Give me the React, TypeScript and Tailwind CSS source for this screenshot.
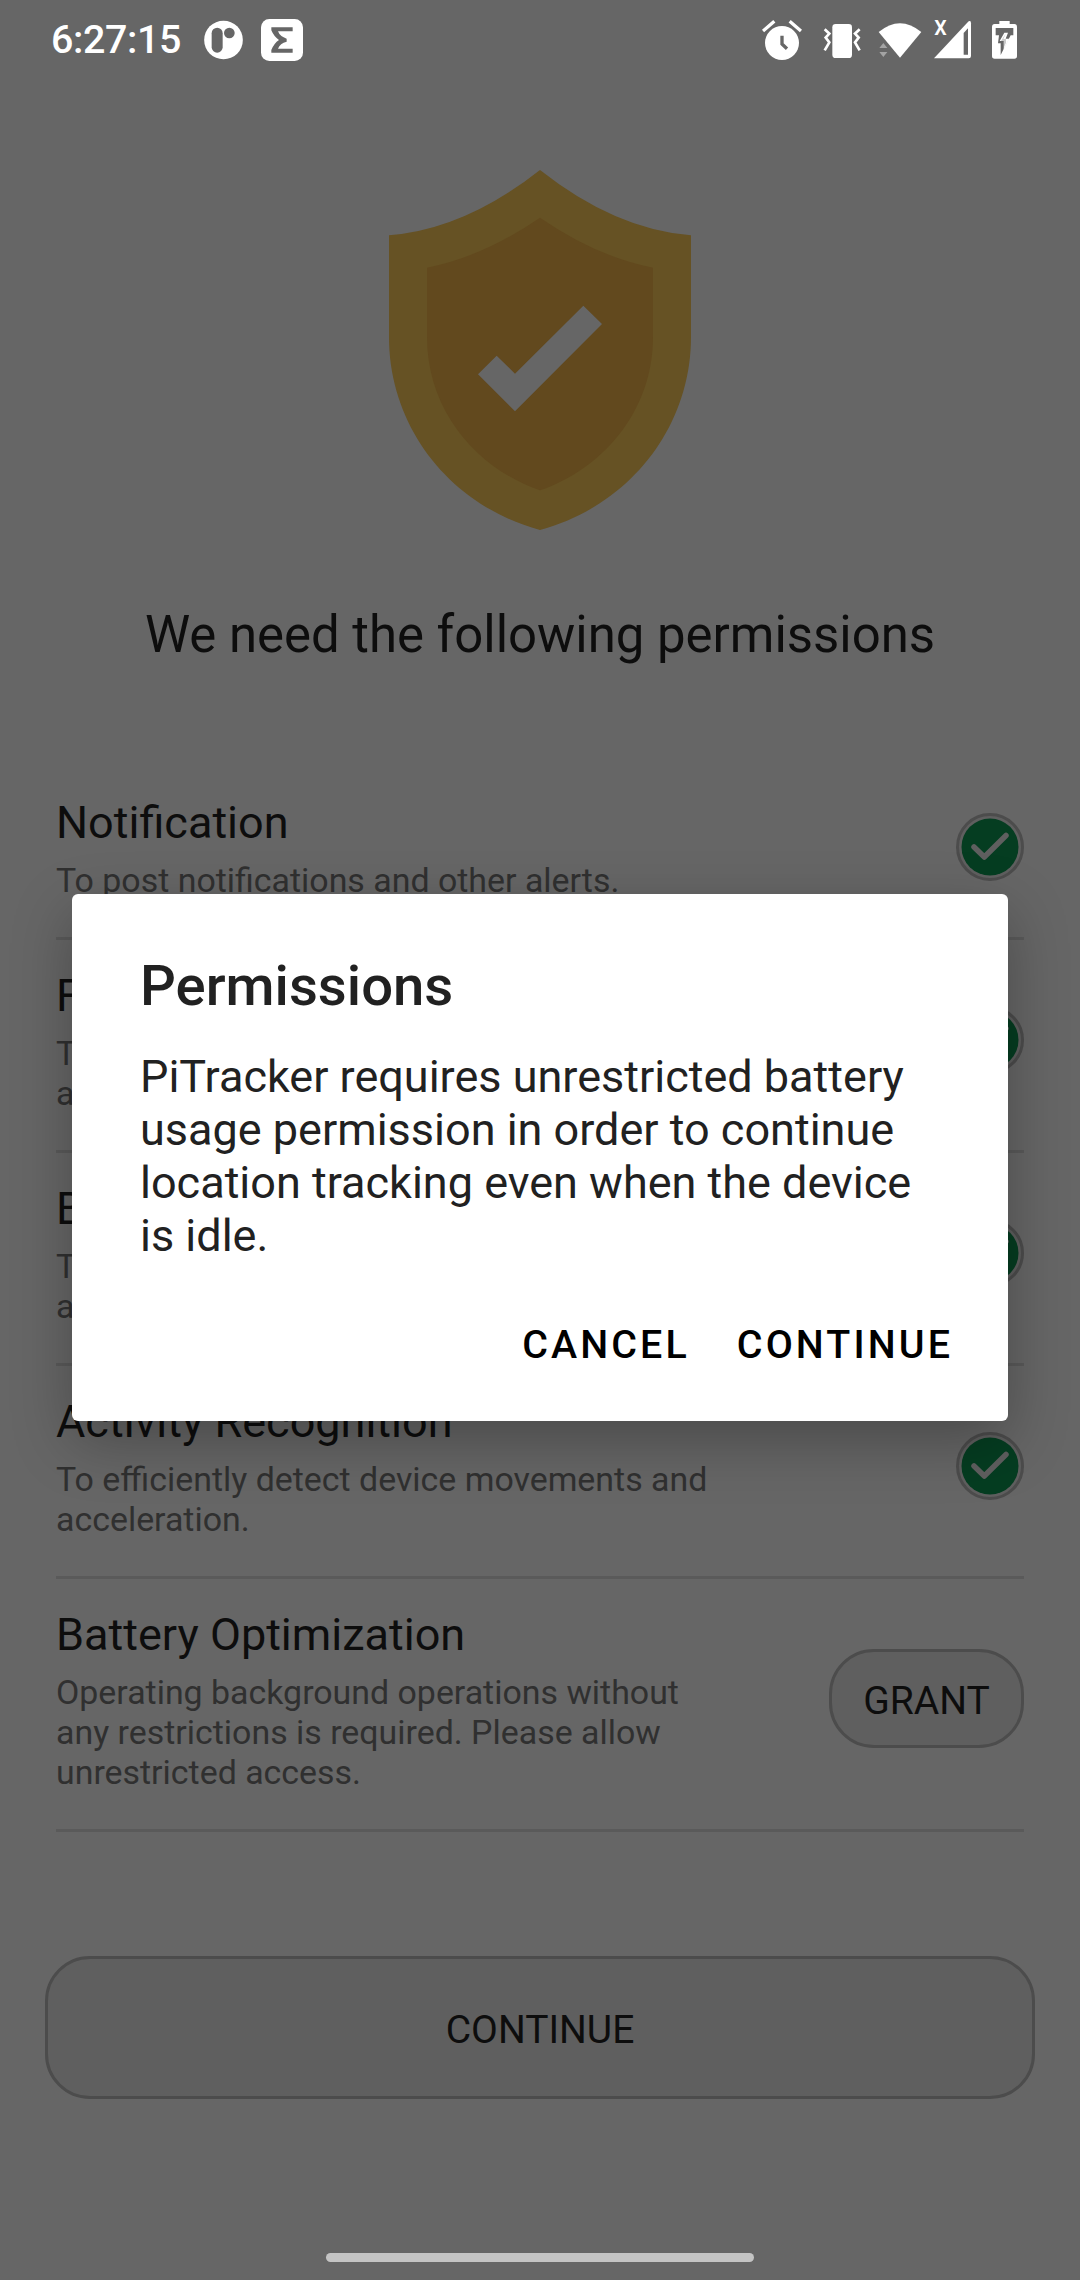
import React from 'react';

const permissions = [
  { title: 'Notification', lines: ['To post notifications and other alerts.'], granted: true },
  { title: 'Foreground Location', lines: ['To track the location of the device', 'and show it on the map.'], granted: true },
  { title: 'Background Location', lines: ['To track the location even when the', 'app is in the background.'], granted: true },
  { title: 'Activity Recognition', lines: ['To efficiently detect device movements and', 'acceleration.'], granted: true },
  {
    title: 'Battery Optimization',
    lines: ['Operating background operations without', 'any restrictions is required. Please allow', 'unrestricted access.'],
    granted: false,
  },
];

const StatusBar = () => (
  <header className="flex h-20 items-center justify-between pl-[51px] pr-[62px] text-white">
    <div className="flex items-center">
      <span className="w-[153px] text-[39.4px] leading-[46px] font-medium tracking-[-0.4px]">6:27:15</span>
      <svg className="h-20 w-[39px]" viewBox="521 0 117 240">
        <circle cx="579.5" cy="120" r="58" fill="#fff" />
        <rect x="544" y="83" width="33" height="75" rx="16.5" fill="#666" />
        <circle cx="597" cy="99" r="16" fill="#666" />
      </svg>
      <svg className="ml-[18px] h-20 w-[42px]" viewBox="693 0 126 240">
        <rect x="693" y="57" width="126" height="126" rx="25" fill="#fff" />
        <path d="M724 82H788V94H744Q750 110 770 116V125Q750 130 744 146H788V158H724V150Q732 130 747 120Q732 110 724 91Z" fill="#666" />
      </svg>
    </div>
    <div className="flex items-center">
      <svg className="h-20 w-10" viewBox="66 0 120 240">
        <circle cx="126" cy="129" r="51" fill="#fff" />
        <path d="M69 93L103 64M149 64L183 93" stroke="#fff" strokeWidth="10" />
        <path d="M126 107V132L141 146" fill="none" stroke="#666" strokeWidth="10" />
      </svg>
      <svg className="ml-[21px] h-20 w-[38px]" viewBox="249 0 114 240">
        <rect x="277" y="72" width="59" height="102" rx="10" fill="#fff" />
        <path d="M254 88L268 101L257 113L268 127L254 151M359 88L345 101L356 113L345 127L359 151" fill="none" stroke="#fff" strokeWidth="8" />
      </svg>
      <svg className="ml-[17px] h-20 w-[44px]" viewBox="414 0 132 240">
        <path d="M416 96Q480 43 544 96L480 173Z" fill="#fff" />
        <path d="M418 144L430 129L442 144ZM418 156H442L430 171Z" fill="#a3a3a3" />
      </svg>
      <svg className="ml-3 h-20 w-[38px]" viewBox="582 0 114 240">
        <path d="M582 175L686 64Q693 60 693 70V168Q693 175 686 175Z" fill="#fff" />
        <path d="M671 99L684 85V164H671Z" fill="#666" />
        <text x="583" y="104" fontSize="59" fontWeight="600" fill="#fff">X</text>
      </svg>
      <svg className="ml-[19px] h-20 w-[27px]" viewBox="753 0 81 240">
        <path d="M778 63H809V72H823Q831 72 831 81V168Q831 176 823 176H764Q756 176 756 168V81Q756 72 764 72H778Z" fill="#fff" />
        <path d="M767 84H820V106H812L782 165V130H774L777 106H767Z" fill="#666" />
        <path d="M793 98L779 123H791V149L808 116H797L804 98Z" fill="#fff" />
        <path d="M797 101L790 117H798V128L788 150L790 126H781Z" fill="#666" fillOpacity=".35" />
      </svg>
    </div>
  </header>
);

const Shield = () => (
  <svg className="mx-auto mt-[90px] h-[360px] w-[302px]" viewBox="87 60 906 1080">
    <path d="M540 60Q765 238 993 256V560C993 840 800 1070 540 1140C280 1070 87 840 87 560V256Q315 238 540 60Z" fill="#665224" />
    <path d="M540 203Q710 320 879 353V560C879 790 720 960 540 1021C360 960 201 790 201 560V353Q370 320 540 203Z" fill="#62491e" />
    <path d="M354 673L410 617L465 671L670 467L726 522L465 784Z" fill="#666" />
  </svg>
);

const GrantedBadge = () => (
  <svg className="-mt-[3px] size-[68px] shrink-0" viewBox="0 0 68 68">
    <circle cx="34" cy="34" r="32.5" fill="#5f5f5f" stroke="#4c4c4c" strokeWidth="3" />
    <circle cx="34" cy="34" r="28.5" fill="#053d21" />
    <path d="M18 34L28.3 44L50 22.5" fill="none" stroke="#5f5f5f" strokeWidth="5.5" strokeLinecap="round" strokeLinejoin="round" />
  </svg>
);

const PermissionRow = ({ title, lines, granted }: (typeof permissions)[number]) => (
  <li className="flex items-center justify-between border-b-[3px] border-[#5a5a5a] pt-[29px] pb-9">
    <div>
      <h2 className="text-[45px] leading-[53px] text-[#0d0d0d]">{title}</h2>
      <p className="mt-3 text-[33.9px] leading-10 whitespace-nowrap text-[#303030]">
        {lines.map((line) => (
          <span key={line} className="block">{line}</span>
        ))}
      </p>
    </div>
    {granted ? (
      <GrantedBadge />
    ) : (
      <button className="-mt-1 h-[99px] w-[195px] shrink-0 rounded-[45px] border-[3px] border-[#4c4c4c] bg-[#5f5f5f] pt-[5px] text-[39px] text-[#0d0d0d]">
        GRANT
      </button>
    )}
  </li>
);

const PermissionDialog = () => (
  <div
    role="dialog"
    className="absolute top-[894px] left-[72px] flex h-[527px] w-[936px] flex-col rounded-[6px] bg-white px-[68px] pt-[59px] shadow-[0_20px_60px_rgba(0,0,0,0.28)]"
  >
    <h2 className="text-[56.25px] leading-[66px] font-medium text-[#212121]">Permissions</h2>
    <p className="mt-[31px] text-[45px] leading-[53px] whitespace-nowrap text-[#212121]">
      PiTracker requires unrestricted battery
      <br />
      usage permission in order to continue
      <br />
      location tracking even when the device
      <br />
      is idle.
    </p>
    <div className="mt-[60px] -mr-[13px] flex justify-end gap-[47px] text-[39.4px] leading-[46px] font-medium tracking-[3.1px] text-black">
      <button>CANCEL</button>
      <button>CONTINUE</button>
    </div>
  </div>
);

const App = () => {
  return (
    <div className="relative flex h-[2280px] w-[1080px] flex-col overflow-hidden bg-[#666] font-[Roboto,sans-serif]">
      <StatusBar />
      <Shield />
      <h1 className="mt-[75px] text-center text-[50.9px] leading-[60px] text-[#0d0d0d]">We need the following permissions</h1>
      <ul className="mx-14 mt-[102px]">
        {permissions.map((permission) => (
          <PermissionRow key={permission.title} {...permission} />
        ))}
      </ul>
      <button className="mx-[45px] mt-[124px] h-[143px] rounded-[45px] border-[3px] border-[#4c4c4c] bg-[#5f5f5f] pt-[5px] text-[39px] text-[#0d0d0d]">
        CONTINUE
      </button>
      <div className="mx-auto mt-[154px] h-[9px] w-[428px] rounded-full bg-[#c4c4c4]" />
      <PermissionDialog />
    </div>
  );
};

export default App;
